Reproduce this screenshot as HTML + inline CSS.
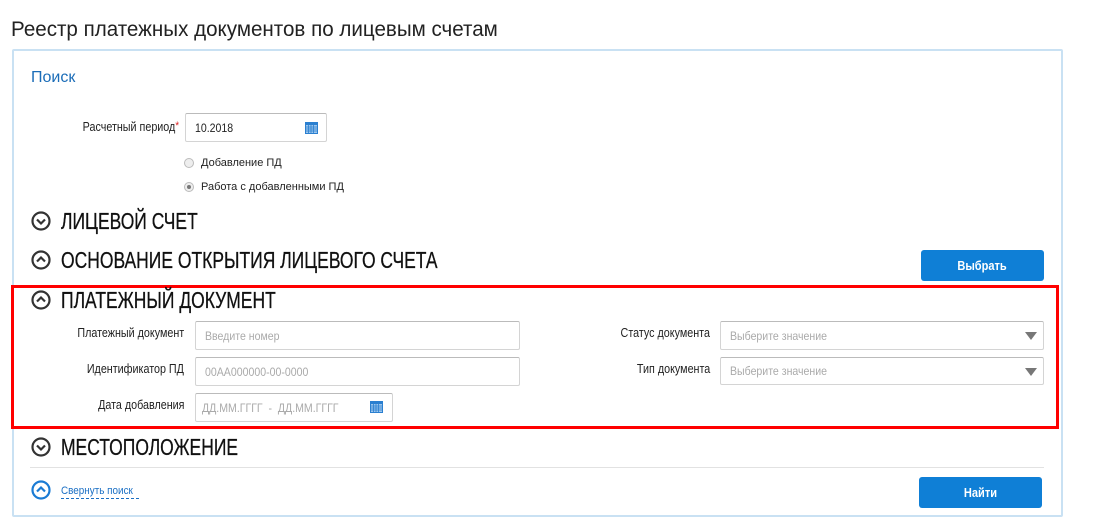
<!DOCTYPE html>
<html><head><meta charset="utf-8"><style>
*{box-sizing:border-box;margin:0;padding:0}
body{width:1111px;height:526px;background:#fff;font-family:"Liberation Sans",sans-serif;position:relative;overflow:hidden;color:#222}
.a{position:absolute}
.title{left:11px;top:18px;font-size:21px;color:#222;white-space:nowrap;transform:scaleX(.98);transform-origin:left}
.panel{left:12px;top:49px;width:1051px;height:468px;border:2px solid #c9e1f3;border-radius:2px}
.lbl{font-size:12.5px;color:#222;text-align:right;white-space:nowrap;transform:scaleX(.86);transform-origin:right center}
.inp{border:1px solid #d4d4d4;border-top-color:#bbb;border-radius:2px;background:#fff;font-size:12px;color:#aaa;padding-left:9px;display:flex;align-items:center;white-space:nowrap}
.inp span{display:inline-block;transform:scaleX(.88);transform-origin:left center}
.h{font-size:23px;color:#111;white-space:nowrap;transform:scaleX(.76);transform-origin:left center;line-height:24px;-webkit-text-stroke:.3px #111}
.btn{background:#0f7fd6;border-radius:3px;color:#fff;font-size:13px;font-weight:bold;display:flex;align-items:center;justify-content:center}
.btn span{display:inline-block;transform:scaleX(.85)}
.ic{width:20px;height:20px}
.arr{width:0;height:0;border-left:6px solid transparent;border-right:6px solid transparent;border-top:8px solid #777}
</style></head><body>
<div class="a title">Реестр платежных документов по лицевым счетам</div>
<div class="a panel"></div>
<div class="a" style="left:31px;top:69px;font-size:16px;color:#1b6db8">Поиск</div>
<div class="a lbl" style="right:932px;top:120px">Расчетный период<span style="color:#d22;vertical-align:top;font-size:11px">*</span></div>
<div class="a inp" style="left:185px;top:113px;width:142px;height:29px;color:#222"><span>10.2018</span></div>
<svg class="a" style="left:305px;top:121px" width="13" height="13" viewBox="0 0 13 13"><rect x="0" y="1" width="13" height="12" fill="#2a7fd0"/><rect x="1" y="4" width="11" height="8" fill="#9cc6ee"/><path d="M1 6h11M1 8h11M1 10h11M3.5 4v8M6 4v8M8.5 4v8" stroke="#2a7fd0" stroke-width=".8"/></svg>
<div class="a" style="left:184px;top:158px;width:10px;height:10px;border-radius:50%;border:1px solid #bbb;background:#eee"></div>
<div class="a" style="left:201px;top:157px;font-size:11px">Добавление ПД</div>
<div class="a" style="left:184px;top:182px;width:10px;height:10px;border-radius:50%;border:1px solid #bbb;background:#eee"></div>
<div class="a" style="left:187px;top:185px;width:4px;height:4px;border-radius:50%;background:#777"></div>
<div class="a" style="left:201px;top:181px;font-size:11px">Работа с добавленными ПД</div>

<svg class="a ic" style="left:31px;top:211px" viewBox="0 0 20 20"><circle cx="10" cy="10" r="8.5" fill="none" stroke="#333" stroke-width="2.2"/><path d="M6 8.5l4 4 4-4" fill="none" stroke="#333" stroke-width="2.2"/></svg>
<div class="a h" style="left:61px;top:209px">ЛИЦЕВОЙ СЧЕТ</div>
<svg class="a ic" style="left:31px;top:250px" viewBox="0 0 20 20"><circle cx="10" cy="10" r="8.5" fill="none" stroke="#333" stroke-width="2.2"/><path d="M6 11.5l4-4 4 4" fill="none" stroke="#333" stroke-width="2.2"/></svg>
<div class="a h" style="left:61px;top:248px">ОСНОВАНИЕ ОТКРЫТИЯ ЛИЦЕВОГО СЧЕТА</div>
<div class="a btn" style="left:921px;top:250px;width:123px;height:31px"><span>Выбрать</span></div>

<div class="a" style="left:11px;top:285px;width:1048px;height:144px;border:3px solid #f00"></div>
<svg class="a ic" style="left:31px;top:290px" viewBox="0 0 20 20"><circle cx="10" cy="10" r="8.5" fill="none" stroke="#333" stroke-width="2.2"/><path d="M6 11.5l4-4 4 4" fill="none" stroke="#333" stroke-width="2.2"/></svg>
<div class="a h" style="left:61px;top:288px">ПЛАТЕЖНЫЙ ДОКУМЕНТ</div>
<div class="a lbl" style="right:927px;top:326px">Платежный документ</div>
<div class="a inp" style="left:195px;top:321px;width:325px;height:29px"><span>Введите номер</span></div>
<div class="a lbl" style="right:927px;top:362px">Идентификатор ПД</div>
<div class="a inp" style="left:195px;top:357px;width:325px;height:29px"><span>00АА000000-00-0000</span></div>
<div class="a lbl" style="right:927px;top:398px">Дата добавления</div>
<div class="a inp" style="left:195px;top:393px;width:198px;height:29px;padding-left:6px"><span>ДД.ММ.ГГГГ&nbsp; - &nbsp;ДД.ММ.ГГГГ</span></div>
<svg class="a" style="left:370px;top:400px" width="13" height="13" viewBox="0 0 13 13"><rect x="0" y="1" width="13" height="12" fill="#2a7fd0"/><rect x="1" y="4" width="11" height="8" fill="#9cc6ee"/><path d="M1 6h11M1 8h11M1 10h11M3.5 4v8M6 4v8M8.5 4v8" stroke="#2a7fd0" stroke-width=".8"/></svg>
<div class="a lbl" style="right:401px;top:326px">Статус документа</div>
<div class="a inp" style="left:720px;top:321px;width:324px;height:29px"><span>Выберите значение</span></div>
<div class="a arr" style="left:1025px;top:332px"></div>
<div class="a lbl" style="right:401px;top:362px">Тип документа</div>
<div class="a inp" style="left:720px;top:357px;width:324px;height:28px"><span>Выберите значение</span></div>
<div class="a arr" style="left:1025px;top:368px"></div>

<svg class="a ic" style="left:31px;top:437px" viewBox="0 0 20 20"><circle cx="10" cy="10" r="8.5" fill="none" stroke="#333" stroke-width="2.2"/><path d="M6 8.5l4 4 4-4" fill="none" stroke="#333" stroke-width="2.2"/></svg>
<div class="a h" style="left:61px;top:435px">МЕСТОПОЛОЖЕНИЕ</div>
<div class="a" style="left:30px;top:467px;width:1014px;height:1px;background:#e2e2e2"></div>
<svg class="a ic" style="left:31px;top:480px" viewBox="0 0 20 20"><circle cx="10" cy="10" r="8.5" fill="none" stroke="#1a7bd4" stroke-width="2.2"/><path d="M6 11.5l4-4 4 4" fill="none" stroke="#1a7bd4" stroke-width="2.2"/></svg>
<div class="a" style="left:61px;top:484px;font-size:11px;color:#1a6fc4;border-bottom:1px dashed #1a6fc4;line-height:14px;width:78px;white-space:nowrap"><span style="display:inline-block;transform:scaleX(.9);transform-origin:left">Свернуть поиск</span></div>
<div class="a btn" style="left:919px;top:477px;width:123px;height:31px"><span>Найти</span></div>
</body></html>
